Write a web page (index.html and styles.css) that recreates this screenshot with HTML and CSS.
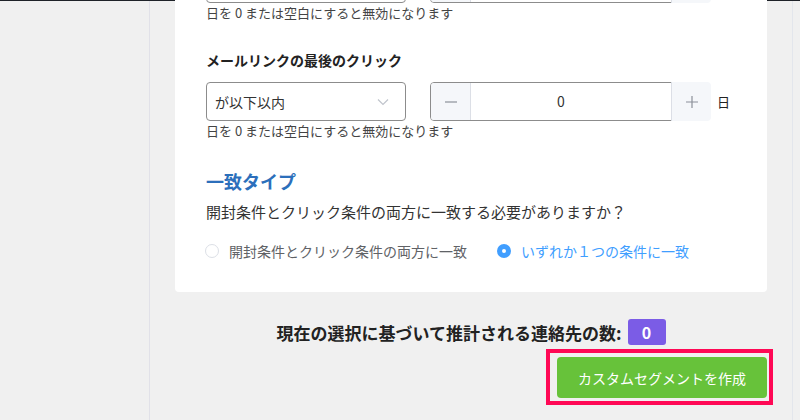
FILE: index.html
```html
<!DOCTYPE html>
<html lang="ja">

<head>
    <meta charset="UTF-8">
    <title>カスタムセグメント</title>
    <link rel="stylesheet" href="styles.css">
</head>

<body>
    <div class="topbar"><span class="topbar-mark"></span></div>
    <div class="layout">
        <aside class="sidebar"></aside>

        <main class="main">
            <section class="card">
                <!-- previous field, scrolled out of view: only the bottom edges show -->
                <div class="field">
                    <div class="field-row">
                        <div class="select"></div>
                        <div class="number">
                            <div class="number-input"></div>
                            <span class="number-btn number-minus"></span>
                            <span class="number-btn number-plus"></span>
                        </div>
                    </div>
                    <p class="hint">日を 0 または空白にすると無効になります</p>
                </div>

                <div class="field">
                    <label class="field-label">メールリンクの最後のクリック</label>
                    <div class="field-row">
                        <div class="select">
                            <span>が以下以内</span>
                            <svg class="chevron" width="12" height="8" viewBox="0 0 12 8"><path d="M1 1.5l5 5 5-5" fill="none" stroke="#c0c4cc" stroke-width="1.2"/></svg>
                        </div>
                        <div class="number">
                            <div class="number-input">0</div>
                            <span class="number-btn number-minus"><svg width="12" height="12" viewBox="0 0 12 12"><path d="M0 6h12" stroke="#8c9099" stroke-width="1.2"/></svg></span>
                            <span class="number-btn number-plus"><svg width="12" height="12" viewBox="0 0 12 12"><path d="M0 6h12M6 0v12" stroke="#8c9099" stroke-width="1.2"/></svg></span>
                        </div>
                        <span class="unit">日</span>
                    </div>
                    <p class="hint">日を 0 または空白にすると無効になります</p>
                </div>

                <h2 class="match-title">一致タイプ</h2>
                <p class="match-question">開封条件とクリック条件の両方に一致する必要がありますか？</p>
                <div class="radio-group">
                    <label class="radio"><span class="radio-dot"></span>開封条件とクリック条件の両方に一致</label>
                    <label class="radio radio-checked"><span class="radio-dot"></span>いずれか１つの条件に一致</label>
                </div>
            </section>

            <div class="summary">現在の選択に基づいて推計される連絡先の数: <span class="badge">0</span></div>

            <div class="actions">
                <div class="highlight">
                    <button type="button" class="btn-create">カスタムセグメントを作成</button>
                </div>
            </div>
        </main>

        <div class="scroll-strip"></div>
    </div>
</body>

</html>
```

FILE: styles.css
```css
body {
    margin: 0;
    height: 420px;
    overflow: hidden;
    background-color: #f0f0f0;
    color: #333;
    font-family: "Noto Sans CJK JP", "Noto Sans", sans-serif;
}

.topbar {
    display: flex;
    height: 1px;
    background-color: #1e2228;
}

.topbar-mark {
    margin-left: 538px;
    width: 92px;
    background-color: #7b5ce6;
}

.layout {
    display: flex;
    height: 419px;
}

.sidebar {
    width: 149px;
    border-right: 1px solid #e1e1e8;
}

.main {
    width: 592px;
    padding: 0 25px;
    border-right: 1px solid #e3e6ec;
}

.scroll-strip {
    flex: 1;
}

.card {
    background-color: #fff;
    border-radius: 0 0 4px 4px;
    margin-top: -37px;
    padding: 0 30px 31px 31px;
}

.field {
    margin-bottom: 27px;
}

.field:last-of-type {
    margin-bottom: 0;
}

.field-label {
    display: block;
    font-size: 14px;
    font-weight: bold;
    line-height: 20px;
    color: #222;
    margin-bottom: 12px;
}

.field-row {
    display: flex;
    align-items: center;
}

.select {
    box-sizing: border-box;
    display: flex;
    align-items: center;
    justify-content: space-between;
    width: 200px;
    height: 39px;
    padding: 0 16px 0 8px;
    border: 1px solid #8c8c8c;
    border-radius: 4px;
    font-size: 14px;
}

.number {
    position: relative;
    width: 281px;
    height: 39px;
    margin-left: 24px;
}

.number-input {
    box-sizing: border-box;
    width: 262px;
    height: 39px;
    border: 1px solid #8c8c8c;
    border-radius: 4px;
    font-size: 14px;
    line-height: 37px;
    text-align: center;
}

.number-btn {
    position: absolute;
    display: flex;
    align-items: center;
    justify-content: center;
    width: 39px;
    background-color: #f5f7fa;
}

.number-minus {
    left: 1px;
    top: 1px;
    height: 37px;
    border-right: 1px solid #dcdfe6;
    border-radius: 3px 0 0 3px;
}

.number-plus {
    right: 0;
    top: 0;
    height: 39px;
    border-left: 1px solid #dcdfe6;
    border-radius: 0 4px 4px 0;
}

.unit {
    margin-left: 6px;
    font-size: 13px;
    color: #222;
}

.hint {
    margin: 0;
    font-size: 13px;
    line-height: 20px;
    color: #444;
}

.match-title {
    margin: 28px 0 0;
    font-size: 18px;
    line-height: 24px;
    color: #2c6fbb;
}

.match-question {
    margin: 8px 0 0;
    font-size: 15px;
    line-height: 22px;
    color: #333;
}

.radio-group {
    display: flex;
    margin-top: 18px;
    margin-left: -1px;
    line-height: 20px;
}

.radio {
    display: flex;
    align-items: center;
    margin-right: 30px;
    font-size: 14px;
    color: #606266;
}

.radio-dot {
    box-sizing: border-box;
    width: 14px;
    height: 14px;
    margin-right: 10px;
    border: 1px solid #dcdfe6;
    border-radius: 50%;
}

.radio-checked {
    color: #409eff;
}

.radio-checked .radio-dot {
    border: 5px solid #409eff;
    background-color: #fff;
}

.summary {
    display: flex;
    align-items: center;
    justify-content: center;
    height: 26px;
    margin-top: 27px;
    font-size: 17px;
    font-weight: bold;
    color: #222;
}

.badge {
    display: inline-block;
    width: 38px;
    height: 26px;
    margin-left: 6px;
    border-radius: 3px;
    background-color: #7b5ce6;
    color: #fff;
    font-size: 16px;
    line-height: 26px;
    text-align: center;
}

.actions {
    display: flex;
    justify-content: flex-end;
    margin-top: 4px;
}

.highlight {
    margin-right: -6px;
    padding: 4px 2px 3px 7px;
    border: 4px solid #ff0855;
}

.btn-create {
    display: block;
    width: 210px;
    height: 41px;
    border: none;
    border-radius: 4px;
    background-color: #67c23a;
    color: #fff;
    font-family: inherit;
    font-size: 14px;
}
```
